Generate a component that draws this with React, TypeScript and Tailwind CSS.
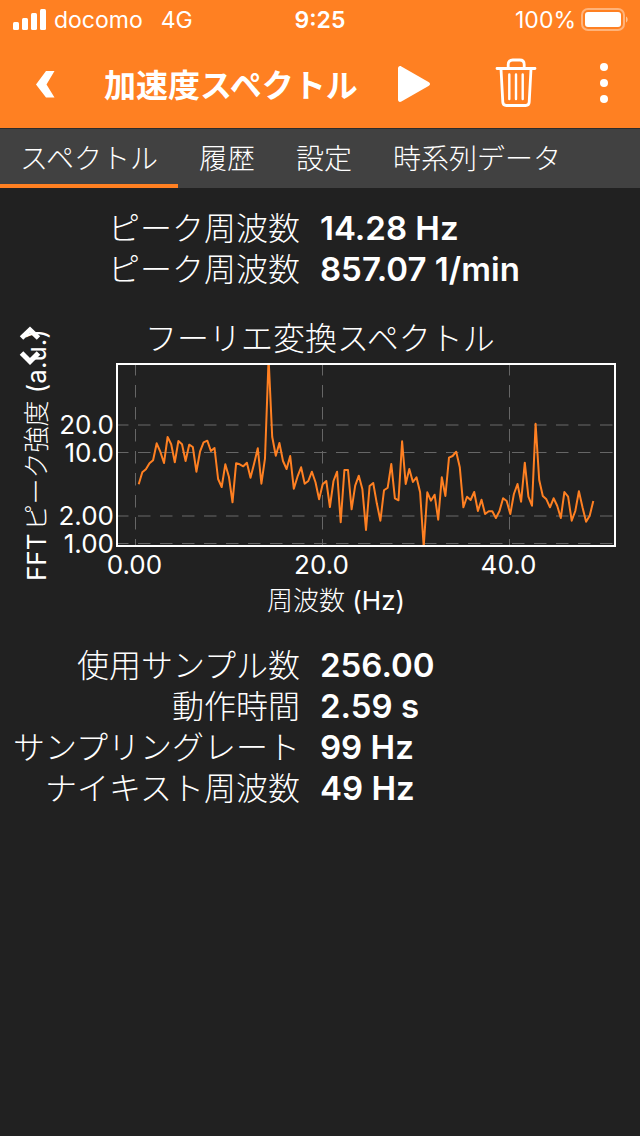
import React, { useState } from 'react';

interface Reading {
  label: string;
  value: string;
}

const tabs = ['スペクトル', '履歴', '設定', '時系列データ'];

const peakReadings: Reading[] = [
  { label: 'ピーク周波数', value: '14.28 Hz' },
  { label: 'ピーク周波数', value: '857.07 1/min' }
];

const sampleReadings: Reading[] = [
  { label: '使用サンプル数', value: '256.00' },
  { label: '動作時間', value: '2.59 s' },
  { label: 'サンプリングレート', value: '99 Hz' },
  { label: 'ナイキスト周波数', value: '49 Hz' }
];

// One entry per FFT bin, in thirds of a chart unit below LEVEL_ORIGIN
const levels = [
  388, 352, 343, 325, 316, 265, 290, 324, 246, 268, 322, 258, 268, 318, 269, 276,
  350, 290, 262, 257, 288, 279, 372, 396, 328, 365, 442, 325, 328, 334, 323, 368,
  325, 280, 386, 310, 10, 245, 302, 264, 318, 342, 303, 401, 365, 337, 386, 378,
  350, 382, 433, 388, 378, 456, 378, 350, 502, 345, 345, 463, 392, 362, 403, 525,
  393, 384, 445, 497, 406, 398, 327, 430, 436, 259, 387, 342, 381, 367, 412, 575,
  412, 437, 419, 494, 367, 423, 308, 303, 290, 337, 457, 425, 435, 411, 468, 434,
  477, 469, 469, 489, 468, 430, 438, 477, 417, 387, 440, 323, 425, 452, 206, 375,
  423, 433, 457, 430, 452, 489, 411, 425, 497, 468, 409, 457, 500, 482, 438
];

const LEVEL_ORIGIN = 45;
const FIRST_BIN_X = 138.7;
const BIN_WIDTH = 3.608;

const trace = levels
  .map((level, i) => `${(FIRST_BIN_X + i * BIN_WIDTH).toFixed(1)},${(LEVEL_ORIGIN + level / 3).toFixed(1)}`)
  .join(' ');

const yTicks = [
  { label: '20.0', y: 115, color: '#454545', width: 2 },
  { label: '10.0', y: 142.5, color: '#666666', width: 1 },
  { label: '2.00', y: 206, color: '#454545', width: 2 },
  { label: '1.00', y: 233.5, color: '#666666', width: 1 }
];

const xTicks = [
  { label: '0.00', x: 135.5 },
  { label: '20.0', x: 322.5 },
  { label: '40.0', x: 509.5 }
];

function StatusBar() {
  return (
    <div className="grid h-10 grid-cols-3 items-center pl-3 pr-3 text-[23px] leading-10">
      <div className="flex items-center gap-1.5">
        <svg className="h-6 w-9" viewBox="0 0 36 24" fill="currentColor" aria-hidden="true">
          <rect x="1" y="14" width="6" height="8" rx="1.5" />
          <rect x="10" y="10" width="6" height="12" rx="1.5" />
          <rect x="19" y="5" width="6" height="17" rx="1.5" />
          <rect x="28" y="1" width="6" height="21" rx="1.5" />
        </svg>
        <span>docomo</span>
        <span className="ml-3">4G</span>
      </div>
      <div className="text-center font-semibold">9:25</div>
      <div className="flex items-center justify-end gap-1">
        <span>100%</span>
        <svg className="h-6 w-12" viewBox="0 0 48 24" aria-hidden="true">
          <rect x="2" y="1" width="42" height="21" rx="6" fill="none" stroke="#fff" strokeOpacity="0.4" strokeWidth="2" />
          <rect x="5" y="4" width="36" height="15" rx="3" fill="#fff" />
          <path d="M46 8.500c2.200 1 2.200 5 0 6z" fill="#fff" fillOpacity="0.5" />
        </svg>
      </div>
    </div>
  );
}

function SpectrumChart() {
  return (
    <svg className="mt-5 block w-full" viewBox="0 0 640 311" fill="#fff" role="img" aria-label="フーリエ変換スペクトル">
      <text x="320" y="40" textAnchor="middle" className="text-[32px] font-light">フーリエ変換スペクトル</text>

      {/* Grid */}
      {yTicks.map(tick => (
        <line
          key={tick.label}
          x1="116"
          x2="614"
          y1={tick.y}
          y2={tick.y}
          stroke={tick.color}
          strokeWidth={tick.width}
          strokeDasharray="12.5 9.5"
        />
      ))}
      {xTicks.map(tick => (
        <line
          key={tick.label}
          x1={tick.x}
          x2={tick.x}
          y1="53"
          y2="236"
          stroke="#666666"
          strokeDasharray="12.5 9.5"
        />
      ))}

      {/* Frame and trace */}
      <rect x="117" y="54" width="498" height="182" fill="none" stroke="#fff" strokeWidth="2" />
      <clipPath id="plot-area">
        <rect x="118" y="55" width="496" height="180" />
      </clipPath>
      <polyline
        points={trace}
        fill="none"
        stroke="#ff8022"
        strokeWidth="2"
        strokeLinejoin="round"
        clipPath="url(#plot-area)"
      />

      {/* Axis labels */}
      {yTicks.map(tick => (
        <text key={tick.label} x="114" y={tick.y + 9} textAnchor="end" className="text-[26px]">
          {tick.label}
        </text>
      ))}
      {xTicks.map(tick => (
        <text key={tick.label} x={tick.x - 1} y="264" textAnchor="middle" className="text-[26px]">
          {tick.label}
        </text>
      ))}
      <text x="336" y="300" textAnchor="middle" className="text-[26px] font-light">
        周波数 <tspan className="font-normal">(Hz)</tspan>
      </text>
      <text transform="translate(46 271) rotate(-90)" className="text-[26px] font-light">
        <tspan className="font-normal">FFT</tspan>
        <tspan dx="3">ピーク強度 </tspan>
        <tspan className="font-normal">(a.u.)</tspan>
      </text>

      {/* Axis scale handle */}
      <path d="M21.500 28l8.500-8 8.500 8M21.500 43l8.500 8.500 8.500-8.500" fill="none" stroke="#fff" strokeWidth="5" />
    </svg>
  );
}

function ReadingList({ items }: { items: Reading[] }) {
  return (
    <dl className="grid grid-cols-2 leading-[41px]">
      {items.map((item, i) => (
        <React.Fragment key={i}>
          <dt className="whitespace-nowrap pr-5 text-right text-[32px] font-light">{item.label}</dt>
          <dd className="text-[33px] font-semibold">{item.value}</dd>
        </React.Fragment>
      ))}
    </dl>
  );
}

export default function App() {
  const [activeTab, setActiveTab] = useState(tabs[0]);

  return (
    <div className="min-h-screen bg-[#212121] font-['Inter','Noto_Sans_CJK_JP',sans-serif] text-white">
      <header className="bg-[#ff8022]">
        <StatusBar />
        <div className="flex h-22 items-center">
          <button type="button" aria-label="戻る" className="flex h-16 w-26 items-center pl-9">
            <svg className="h-7 w-5" viewBox="0 0 20 28" fill="currentColor">
              <path d="M10 1h8.500L10.500 14.500 18.500 27.500H10L0 14.500z" />
            </svg>
          </button>
          <h1 className="whitespace-nowrap pt-1 text-[32px] font-bold leading-10">加速度スペクトル</h1>
          <button type="button" aria-label="開始" className="ml-9 flex size-10 items-center justify-start">
            <svg className="h-10 w-9" viewBox="0 0 36 40" fill="currentColor">
              <path d="M4 4.500c0-2 1.600-3 3.400-2L34.500 18c2 1.100 2 2.900 0 4L7.400 37.500c-1.800 1-3.400 0-3.400-2z" />
            </svg>
          </button>
          <div className="ml-auto flex items-center pb-0.5">
            <button type="button" aria-label="削除" className="mr-10 flex h-16 w-12 items-center justify-center">
              <svg
                className="h-13 w-11"
                viewBox="0 0 44 52"
                fill="none"
                stroke="currentColor"
                strokeLinecap="round"
                strokeLinejoin="round"
              >
                <path
                  d="M3 11.500h38M14.200 11V7.500q0-4.500 4.500-4.500h7q4.500 0 4.500 4.500V11M7 12l1.800 33.200q.2 3.300 3.500 3.300h19.400q3.300 0 3.500-3.300L37 12"
                  strokeWidth="2.800"
                />
                <path d="M15.300 17.500v24.500M22 17.500v24.500M28.700 17.500v24.500" strokeWidth="2.400" />
              </svg>
            </button>
            <button type="button" aria-label="メニュー" className="mr-3 flex h-16 w-12 items-center justify-center">
              <svg className="h-11 w-4" viewBox="0 0 16 44" fill="currentColor">
                <circle cx="8" cy="6" r="4" />
                <circle cx="8" cy="22" r="4" />
                <circle cx="8" cy="38" r="4" />
              </svg>
            </button>
          </div>
        </div>
      </header>

      <nav className="flex h-15 gap-px border-t border-[#2b2b2b] bg-[#414141]">
        {tabs.map(tab => (
          <button
            key={tab}
            type="button"
            onClick={() => setActiveTab(tab)}
            className={`whitespace-nowrap border-b-4 px-5 pt-1 text-[28px] font-light leading-10 ${
              activeTab === tab ? 'border-[#ff8022]' : 'border-transparent'
            }`}
          >
            {tab}
          </button>
        ))}
      </nav>

      <main className="pt-5">
        <ReadingList items={peakReadings} />
        <SpectrumChart />
        <div className="mt-6">
          <ReadingList items={sampleReadings} />
        </div>
      </main>
    </div>
  );
}
